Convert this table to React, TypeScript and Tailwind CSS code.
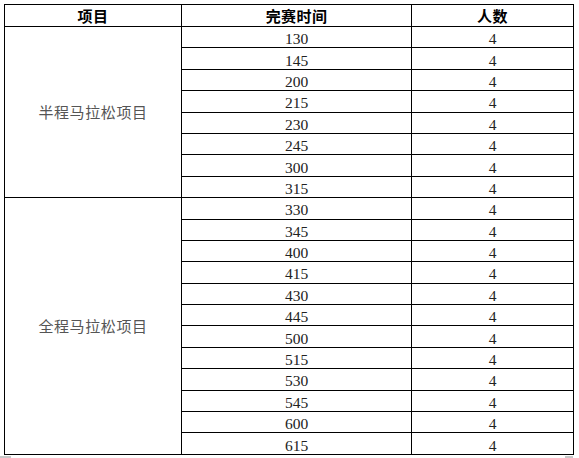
import React from 'react';

const halfMarathon = ['130', '145', '200', '215', '230', '245', '300', '315'];
const fullMarathon = ['330', '345', '400', '415', '430', '445', '500', '515', '530', '545', '600', '615'];

const cell = 'border border-black text-center align-middle p-0';
const numFont = { fontFamily: '"Liberation Serif", "Noto Sans CJK SC", serif' };

const App = () => {
  const groups = [
    { name: '半程马拉松项目', times: halfMarathon },
    { name: '全程马拉松项目', times: fullMarathon },
  ];

  return (
    <div className="w-[579px] h-[458px] bg-white pt-[4px] pl-[4px] overflow-hidden">
      <table className="table-fixed border-collapse w-[569px]">
        <colgroup>
          <col className="w-[177px]" />
          <col className="w-[230px]" />
          <col className="w-[162px]" />
        </colgroup>
        <thead>
          <tr className="h-[22px]">
            {['项目', '完赛时间', '人数'].map((h) => (
              <th
                key={h}
                className={`${cell} text-[15px] leading-none font-bold text-black tracking-[0.4px]`}
                style={{ fontFamily: '"Noto Sans CJK SC", sans-serif' }}
              >
                {h}
              </th>
            ))}
          </tr>
        </thead>
        <tbody>
          {groups.map((g) =>
            g.times.map((t, i) => (
              <tr key={t} className="h-[21.4px]">
                {i === 0 && (
                  <td
                    rowSpan={g.times.length}
                    className={`${cell} text-[15px] tracking-[0.6px] text-[#555]`}
                    style={{ fontFamily: '"Noto Sans CJK SC", sans-serif' }}
                  >
                    {g.name}
                  </td>
                )}
                <td className={`${cell} pt-[3px] text-[15.5px] leading-[15px] text-[#222]`} style={numFont}>
                  {t}
                </td>
                <td className={`${cell} pt-[3px] text-[15.5px] leading-[15px] text-[#222]`} style={numFont}>
                  4
                </td>
              </tr>
            ))
          )}
        </tbody>
      </table>
      <div className="flex justify-between w-[573px] -ml-[4px] mt-[1px]">
        <div className="w-[11px] h-[2px] bg-[#c8c8c8]" />
        <div className="w-[8px] h-[2px] bg-[#c8c8c8]" />
      </div>
    </div>
  );
};

export default App;
